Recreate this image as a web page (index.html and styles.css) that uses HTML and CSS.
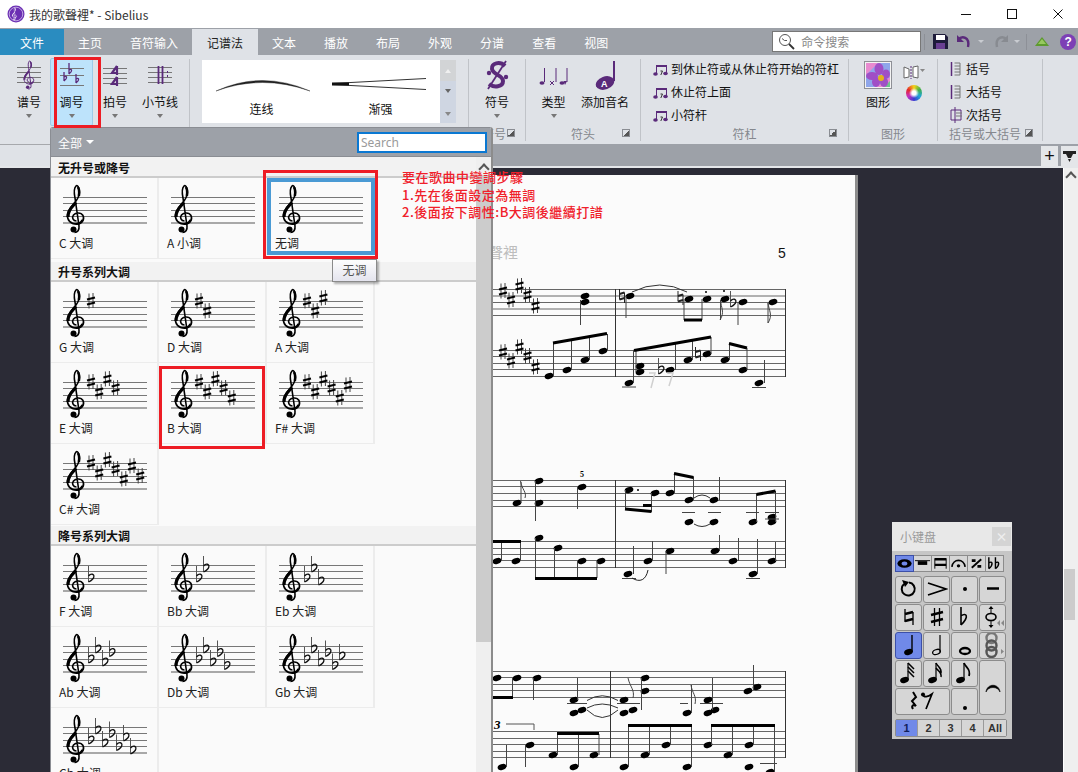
FILE: index.html
```html
<!DOCTYPE html>
<html lang="zh">
<head>
<meta charset="utf-8">
<title>我的歌聲裡* - Sibelius</title>
<link rel="stylesheet" href="styles.css">
</head>
<body>
<svg class="defs" aria-hidden="true"><defs>
  <g id="clef" fill="none" stroke="currentColor">
    <path stroke-width="1.6" d="M12.5 37C9 37 7.5 33.5 9.5 31C11.5 28.5 17 28 19 31.5C21 36 17.5 40 12.5 40C6.5 40 3 36 3.5 31C4 25 9 21 12 17C15 13 16 9 15 5C14.5 2 13 1 12 2C10 4 10 9 11 14L15 42C15.5 46 13.5 48.5 10.5 48.5"/>
    <path stroke-width="3.2" d="M4 33C3.500 26 9 22 12 18.500"/>
    <path stroke-width="2.6" d="M14.800 12C15.800 8 15 4 13.500 3"/>
    <path stroke-width="2.4" d="M18.500 36C17 39 14 40 11.500 39.800"/>
    <circle cx="9.500" cy="45.500" r="3" fill="currentColor" stroke="none"/>
  </g>
  <g id="staff">
    <path d="M0 14.500H84M0 20.500H84M0 27.500H84M0 33.500H84" stroke="#777" fill="none"/>
    <path d="M0 40H84" stroke="#a8a8a8" stroke-width="2" fill="none"/>
    <use href="#clef" transform="translate(1 1)"/>
  </g>
  <g id="sh">
    <path d="M-2 -7.500V7.500M2 -8V7" stroke="#444" fill="none"/>
    <path d="M-4 -1.500L4 -3.500M-4 3.500L4 1.500" stroke="#000" stroke-width="2" fill="none"/>
  </g>
  <g id="fl" fill="none">
    <path d="M-2.500 -11V5" stroke="#555"/>
    <path d="M-2.500 -1C0 -4 3.500 -3 2.800 0C2.300 2.500 -.5 4 -2.500 5" stroke="#111" stroke-width="1.300"/>
  </g>
  <g id="na" fill="none" stroke="#222">
    <path d="M-2.500 -7V3.500M2.500 -3.500V7" stroke-width="1"/>
    <path d="M-2.500 -2L2.500 -3.500M-2.500 3.500L2.500 2" stroke-width="2"/>
  </g>
  <ellipse id="n" rx="4.500" ry="2.900" transform="rotate(-20)" fill="#000"/>
  <g id="s1"><use href="#sh" x="28" y="14"/></g>
  <g id="s2"><use href="#s1"/><use href="#sh" x="36.200" y="24"/></g>
  <g id="s3"><use href="#s2"/><use href="#sh" x="44.400" y="11"/></g>
  <g id="s4"><use href="#s3"/><use href="#sh" x="52.600" y="20"/></g>
  <g id="s5"><use href="#s4"/><use href="#sh" x="60.800" y="30"/></g>
  <g id="s6"><use href="#s5"/><use href="#sh" x="69" y="17"/></g>
  <g id="s7"><use href="#s6"/><use href="#sh" x="77.200" y="27"/></g>
  <g id="f1"><use href="#fl" x="28" y="26"/></g>
  <g id="f2"><use href="#f1"/><use href="#fl" x="35" y="16"/></g>
  <g id="f3"><use href="#f2"/><use href="#fl" x="42" y="29"/></g>
  <g id="f4"><use href="#f3"/><use href="#fl" x="49" y="19.500"/></g>
  <g id="f5"><use href="#f4"/><use href="#fl" x="56" y="32.500"/></g>
  <g id="f6"><use href="#f5"/><use href="#fl" x="63" y="23"/></g>
  <g id="f7"><use href="#f6"/><use href="#fl" x="70" y="36"/></g>
  <g id="mini-beam" fill="none" stroke="#5a2a7a">
    <path d="M3 5H14" stroke-width="2"/>
    <path d="M3.500 5V13M13.500 5V12" stroke-width="1"/>
    <ellipse cx="2.500" cy="13" rx="2.300" ry="1.700" fill="#5a2a7a" stroke="none"/>
    <ellipse cx="12.500" cy="12.500" rx="2.300" ry="1.700" fill="#5a2a7a" stroke="none"/>
    <path d="M7.500 10L9.500 10L7.800 14" stroke="#333"/>
  </g>
  <g id="mini-bracket" fill="none" stroke="#5a2a7a">
    <path d="M1.500 1V15" stroke-width="1.500"/>
    <path d="M4.500 2H10V14H4.500M4.500 5H10M4.500 8H10M4.500 11H10" stroke="#777"/>
  </g>
</defs></svg>

<div class="app">
  <header class="titlebar">
    <svg class="app-icon" width="18" height="18" viewBox="0 0 18 18"><circle cx="9" cy="9" r="8.500" fill="#6b2fb3"/><circle cx="9" cy="9" r="6.800" fill="none" stroke="#e4d8f4" stroke-width=".7"/><use href="#clef" class="clef-white" transform="translate(4.500 2.500) scale(.26)"/></svg>
    <span class="title-text">我的歌聲裡* - Sibelius</span>
    <div class="winctl">
      <svg width="10" height="10" viewBox="0 0 10 10"><path d="M0 5.500H10" stroke="#111"/></svg>
      <svg width="10" height="10" viewBox="0 0 10 10"><rect x=".5" y=".5" width="9" height="9" fill="none" stroke="#111"/></svg>
      <svg width="10" height="10" viewBox="0 0 10 10"><path d="M.5 .5L9.500 9.500M9.500 .5L.5 9.500" stroke="#111"/></svg>
    </div>
  </header>

  <nav class="tabs">
    <span class="tab tab-file">文件</span>
    <span class="tab">主页</span>
    <span class="tab">音符输入</span>
    <span class="tab tab-active">记谱法</span>
    <span class="tab">文本</span>
    <span class="tab">播放</span>
    <span class="tab">布局</span>
    <span class="tab">外观</span>
    <span class="tab">分谱</span>
    <span class="tab">查看</span>
    <span class="tab">视图</span>
    <div class="quick">
      <div class="cmd-search">
        <svg width="17" height="17" viewBox="0 0 17 17"><circle cx="7" cy="7" r="5.500" fill="#fff" stroke="#555"/><path d="M11 11L16 16" stroke="#333" stroke-width="1.800"/><path d="M4 5.500L6.500 7.500H9" fill="none" stroke="#555"/></svg>
        <span>命令搜索</span>
      </div>
      <i class="q-sep"></i>
      <svg class="q-save" width="15" height="15" viewBox="0 0 15 15"><path d="M0 0H12L15 3V15H0Z" fill="#1e1b3a"/><rect x="3" y="1" width="9" height="5" fill="#fff"/><rect x="3" y="9" width="9" height="6" fill="#6a3f92"/></svg>
      <svg class="q-undo" width="17" height="15" viewBox="0 0 17 15"><path d="M2 6C6 1 14 3 12 13" fill="none" stroke="#5a2a7a" stroke-width="2.400"/><path d="M1 1V8H8Z" fill="#5a2a7a"/></svg>
      <i class="q-drop"></i>
      <svg class="q-redo" width="17" height="15" viewBox="0 0 17 15"><path d="M15 6C11 1 3 3 5 13" fill="none" stroke="#888b91" stroke-width="2.400"/><path d="M16 1V8H9Z" fill="#888b91"/></svg>
      <i class="q-drop"></i>
      <i class="q-sep"></i>
      <svg class="q-tri" width="14" height="9" viewBox="0 0 14 9"><path d="M7 0L14 9H0Z" fill="#5d9a2e"/><path d="M7 2L11 7H3Z" fill="#97c95f"/></svg>
      <span class="q-help">?</span>
    </div>
  </nav>

  <section class="ribbon">
    <div class="group g-notes">
      <div class="gbody">
        <div class="rb rb-clef">
          <svg width="28" height="30" viewBox="0 0 28 30"><path d="M2 7.500H26M2 12.500H26M2 17.500H26M2 22.500H26" stroke="#777" fill="none"/><use href="#clef" class="purple" transform="translate(7 0) scale(.6)"/></svg>
          <span>谱号</span><i class="drop"></i>
        </div>
        <div class="rb rb-key">
          <svg width="28" height="30" viewBox="0 0 28 30"><path d="M2 8.500H26M2 15.500H26M2 25.500H26" stroke="#777" fill="none"/><g class="purple"><path d="M11 3V14M11 10C14 8 15 11 11 14M6 12V21M6 17C9 15 10 18 6 21M18 14V23M18 19C21 17 22 20 18 23" fill="none" stroke="currentColor" stroke-width="1.300"/></g></svg>
          <span>调号</span><i class="drop"></i>
        </div>
        <div class="rb rb-time">
          <svg width="28" height="30" viewBox="0 0 28 30"><path d="M2 8.500H26M2 13.500H26M2 18.500H26M2 23.500H26" stroke="#777" fill="none"/><path d="M16 6L11 13H17M16 6V15M16 17L11 24H17M16 17V26" fill="none" stroke="#5a2a7a" stroke-width="2.200"/></svg>
          <span>拍号</span><i class="drop"></i>
        </div>
        <div class="rb rb-bar">
          <svg width="28" height="30" viewBox="0 0 28 30"><path d="M2 7.500H26M2 12.500H26M2 17.500H26M2 22.500H26" stroke="#777" fill="none"/><path d="M12.500 6V24M16.500 6V24" stroke="#5a2a7a" stroke-width="1.800"/><path d="M21.500 11V19" stroke="#5a2a7a" stroke-dasharray="2 2"/></svg>
          <span>小节线</span><i class="drop"></i>
        </div>
      </div>
    </div>

    <div class="group g-lines">
      <div class="gallery">
        <div class="g-item">
          <svg width="119" height="40" viewBox="0 0 119 40"><path d="M14 31Q60 10 108 31Q60 14 14 31Z" fill="#222" stroke="#222" stroke-width=".4"/></svg>
          <span>连线</span>
        </div>
        <div class="g-item">
          <svg width="119" height="40" viewBox="0 0 119 40"><path d="M11 23.500L105 18.500M11 24.500L105 29.500" stroke="#333" fill="none"/><path d="M11 22.500H28V25.500H11Z" fill="#111"/></svg>
          <span>渐强</span>
        </div>
        <div class="g-scroll">
          <b class="gs-up"></b><b class="gs-down"></b><b class="gs-more"></b>
        </div>
      </div>
    </div>

    <div class="group g-sym">
      <div class="gbody">
        <div class="rb rb-wide">
          <svg width="34" height="30" viewBox="0 0 34 30"><path d="M25 6C20 1 11 3 12 9C13 15 23 15 23 21C23 27 14 28 9 24" fill="none" stroke="#5a2a7a" stroke-width="4"/><path d="M26 1L8 29" stroke="#5a2a7a" stroke-width="1.800"/><circle cx="9" cy="13" r="2.200" fill="#5a2a7a"/><circle cx="26" cy="17" r="2.200" fill="#5a2a7a"/></svg>
          <span>符号</span><i class="drop"></i>
        </div>
      </div>
      <div class="glabel lbl-sym">符号<i class="expand"></i></div>
    </div>

    <div class="group g-head">
      <div class="gbody">
        <div class="rb rb-type">
          <svg width="30" height="30" viewBox="0 0 30 30"><g fill="#5a2a7a" stroke="none"><ellipse cx="3" cy="23" rx="2.500" ry="1.800"/><ellipse cx="23" cy="23" rx="2.500" ry="1.800"/></g><path d="M5.500 8V22M17 8V22M28 8V22" stroke="#5a2a7a"/><path d="M11 21L15 25M15 21L11 25" stroke="#5a2a7a"/><path d="M24.500 21L28 21L26 25Z" fill="#5a2a7a"/></svg>
          <span>类型</span><i class="drop"></i>
        </div>
        <div class="rb rb-name">
          <svg width="30" height="30" viewBox="0 0 30 30"><path d="M24 1V21" stroke="#5a2a7a" stroke-width="2"/><ellipse cx="15" cy="23" rx="9.500" ry="6.500" transform="rotate(-20 15 23)" fill="#5a2a7a"/><text x="11" y="27" class="name-a">A</text></svg>
          <span>添加音名</span>
        </div>
      </div>
      <div class="glabel">符头<i class="expand"></i></div>
    </div>

    <div class="group g-beam">
      <div class="gbody gcol">
        <div class="row"><svg width="16" height="16" viewBox="0 0 16 16"><use href="#mini-beam"/></svg><span>到休止符或从休止符开始的符杠</span></div>
        <div class="row"><svg width="16" height="16" viewBox="0 0 16 16"><use href="#mini-beam"/></svg><span>休止符上面</span></div>
        <div class="row"><svg width="16" height="16" viewBox="0 0 16 16"><use href="#mini-beam"/></svg><span>小符杆</span></div>
      </div>
      <div class="glabel">符杠<i class="expand"></i></div>
    </div>

    <div class="group g-graphic">
      <div class="gbody">
        <div class="rb rb-img">
          <svg class="img-icon" width="28" height="28" viewBox="0 0 28 28">
            <rect width="28" height="28" fill="#f3f3f3"/><rect x="2" y="2" width="24" height="24" fill="#8fa6ea"/>
            <path d="M2 2H14L2 14ZM26 16V26H12Z" fill="#e88ad0"/><path d="M20 26H26V20Z" fill="#6fc48d"/>
            <g fill="#a04fc6"><ellipse cx="15" cy="8" rx="4.500" ry="6"/><ellipse cx="8" cy="15" rx="6" ry="4"/><ellipse cx="22" cy="13" rx="4" ry="4.500"/><ellipse cx="12" cy="21" rx="4" ry="5"/><ellipse cx="20" cy="21" rx="4" ry="5"/></g>
            <circle cx="17" cy="17" r="3" fill="#e3b21f"/>
          </svg>
          <span>图形</span>
        </div>
        <div class="g-side">
          <svg width="22" height="14" viewBox="0 0 22 14"><path d="M1 2L6 4V12L1 13ZM10 2L15 1V13L10 12Z" fill="#fff" stroke="#666"/><path d="M8 1V14" stroke="#5a2a7a" stroke-dasharray="2 1"/><path d="M17 4H22L19.500 7Z" fill="#888"/></svg>
          <i class="wheel"></i>
        </div>
      </div>
      <div class="glabel">图形</div>
    </div>

    <div class="group g-brack">
      <div class="gbody gcol">
        <div class="row"><svg width="14" height="16" viewBox="0 0 14 16"><use href="#mini-bracket"/></svg><span>括号</span></div>
        <div class="row"><svg width="14" height="16" viewBox="0 0 14 16"><use href="#mini-bracket"/></svg><span>大括号</span></div>
        <div class="row"><svg width="14" height="16" viewBox="0 0 14 16"><path d="M5 0V16" stroke="#5a2a7a"/><path d="M1 3H11V13H1Z" fill="none" stroke="#5a2a7a"/><path d="M6 6H12M6 9H12" stroke="#777"/></svg><span>次括号</span></div>
      </div>
      <div class="glabel">括号或大括号<i class="expand"></i></div>
    </div>
  </section>

  <div class="docstrip">
    <div class="doc-tab"></div>
    <span class="strip-btn">+</span>
    <span class="strip-btn strip-menu"><svg width="13" height="11" viewBox="0 0 13 11"><path d="M0 0H13V3H10L8 7H5L3 3H0Z" fill="#222"/><path d="M5 8H8L6.500 11Z" fill="#222"/></svg></span>
  </div>

  <main class="workspace">
    <div class="canvas">
      <div class="page">
        <svg class="score" width="366" height="597" viewBox="491 175 366 597">
          <text x="518" y="258" class="score-title">我的歌聲裡</text>
          <text x="778" y="258" class="score-num">5</text>
          <g fill="none" stroke="#666">
            <path d="M491 289.500H785M491 296H785M491 302.500H785M491 309H785M491 315.500H785"/>
            <path d="M491 350.500H785M491 356.500H785M491 363.500H785M491 369.500H785M491 376.500H785"/>
            <path d="M491 480.500H785M491 486.500H785M491 493.500H785M491 500.500H785M491 506.500H785"/>
            <path d="M491 541.500H785M491 548.500H785M491 554.500H785M491 560.500H785M491 567.500H785"/>
            <path d="M491 671.500H785M491 677.500H785M491 684.500H785M491 690.500H785M491 697.500H785"/>
            <path d="M491 731.500H785M491 738.500H785M491 744.500H785M491 751.500H785M491 757.500H785"/>
            <path stroke="#333" d="M615.500 289V377M785.500 289V377M615.500 480V568M785.500 480V568M610.500 671V758M785.500 671V758"/>
          </g>
          <g><use href="#sh" x="503" y="291"/><use href="#sh" x="511" y="300"/><use href="#sh" x="519.500" y="286"/><use href="#sh" x="527.500" y="295"/><use href="#sh" x="535.500" y="306"/>
             <use href="#sh" x="503" y="352"/><use href="#sh" x="511" y="361"/><use href="#sh" x="519.500" y="347"/><use href="#sh" x="527.500" y="356"/><use href="#sh" x="535.500" y="367"/>
             <use href="#na" x="622" y="296"/><use href="#na" x="680.500" y="298"/><use href="#na" x="698" y="354"/>
             <use href="#fl" x="733" y="302"/><use href="#fl" x="661" y="369"/></g>
          <g>
            <use href="#n" x="585" y="296"/><use href="#n" x="585" y="302"/><use href="#n" x="630" y="296"/><use href="#n" x="689" y="299"/><use href="#n" x="707" y="299"/><use href="#n" x="725" y="299"/><use href="#n" x="743" y="302"/><use href="#n" x="773" y="302"/>
            <use href="#n" x="549" y="376"/><use href="#n" x="567" y="370"/><use href="#n" x="585" y="360"/><use href="#n" x="603" y="351"/>
            <use href="#n" x="629" y="383"/><use href="#n" x="640" y="366"/><use href="#n" x="640" y="372"/><use href="#n" x="670" y="370"/><use href="#n" x="688" y="360"/><use href="#n" x="707" y="354"/><use href="#n" x="725" y="360"/><use href="#n" x="743" y="370"/><use href="#n" x="759" y="383"/>
            <use href="#n" x="517" y="503"/><use href="#n" x="539" y="481"/><use href="#n" x="539" y="503"/><use href="#n" x="582" y="487"/>
            <use href="#n" x="629" y="490"/><use href="#n" x="655" y="493"/><use href="#n" x="670" y="493"/><use href="#n" x="689" y="500"/><use href="#n" x="689" y="522"/><use href="#n" x="714" y="500"/><use href="#n" x="714" y="522"/><use href="#n" x="753" y="522"/><use href="#n" x="772" y="517"/><use href="#n" x="772" y="522"/>
            <use href="#n" x="497" y="561"/><use href="#n" x="516" y="561"/><use href="#n" x="539" y="538"/><use href="#n" x="558" y="548"/><use href="#n" x="582" y="561"/><use href="#n" x="601" y="561"/>
            <use href="#n" x="628" y="574"/><use href="#n" x="648" y="561"/><use href="#n" x="670" y="551"/><use href="#n" x="715" y="551"/><use href="#n" x="733" y="561"/><use href="#n" x="753" y="574"/><use href="#n" x="772" y="561"/>
            <use href="#n" x="497" y="678"/><use href="#n" x="517" y="678"/><use href="#n" x="537" y="678"/><use href="#n" x="574" y="700"/><use href="#n" x="574" y="713"/><use href="#n" x="582" y="710"/><use href="#n" x="624" y="700"/><use href="#n" x="624" y="713"/><use href="#n" x="633" y="710"/><use href="#n" x="645" y="678"/><use href="#n" x="645" y="691"/><use href="#n" x="687" y="713"/><use href="#n" x="708" y="700"/><use href="#n" x="708" y="713"/><use href="#n" x="715" y="710"/><use href="#n" x="748" y="691"/><use href="#n" x="757" y="687"/>
            <use href="#n" x="502" y="767"/><use href="#n" x="530" y="745"/><use href="#n" x="553" y="755"/><use href="#n" x="574" y="767"/><use href="#n" x="594" y="755"/><use href="#n" x="624" y="767"/><use href="#n" x="645" y="755"/><use href="#n" x="666" y="745"/><use href="#n" x="687" y="767"/><use href="#n" x="708" y="745"/><use href="#n" x="728" y="755"/><use href="#n" x="749" y="745"/><use href="#n" x="749" y="767"/><use href="#n" x="770" y="772"/>
          </g>
          <g fill="none" stroke="#444">
            <path d="M580.500 300V325M626 296V318M684 299V320M702 299V320M720.500 300V320M738 302V325M768 303V323"/>
            <path d="M553.500 376V343M571.500 370V340M589.500 360V337M607.500 351V334"/>
            <path d="M633.500 383V350M636 372V351M675.500 370V344M692.500 360V340M711 354V337M729.500 360V343M747 370V348M764.500 383V360"/>
            <path d="M521 503V482M535.500 481V521M577.500 487V509M625.500 490V508M651.500 493V512M674.500 493V474M693.500 477V500M719.500 477V500"/>
            <path d="M756.500 522V494M775.500 522V491"/>
            <path d="M501.500 561V542M520.500 561V542M535.500 538V578M554.500 548V578M577.500 561V578M597 561V578"/>
            <path d="M633.500 574V546M652.500 561V541M666 551V574M719.500 551V535M738.500 561V538M757.500 574V539M775.500 561V542"/>
            <path d="M512.500 678V697M533.500 678V700M577.500 678V700M641.500 678V710M691.500 713V685M712.500 678V710M753.500 665V690"/>
            <path d="M506.500 745V767M525.500 745V767M557.500 755V734M578.500 767V734M599 755V734M628.500 767V726M649.500 755V726M670.500 745V726M691.500 767V726M711.500 745V726M732.500 755V726M753.500 745V726M774.500 772V726"/>
            <path d="M567 703.500H587M617 703.500H640M680 703.500H688M700 703.500H723M682 512.500H695M708 512.500H721M746 512.500H759M765 512.500H779M765 519H779M622 387H636M752 387.500H766"/>
            <path d="M760 763.500H777M622 578.500H636M746 578.500H760"/>
            <path d="M720.500 300C721 308 725 312 720 320M768 303C769 311 773 315 768 323M520.500 481C522 490 527 492 525 498M628 678C630 687 635 690 633 698M691 685C692 693 697 696 695 704"/>
            <path d="M632 292Q660 278 687 292" stroke="#333"/>
            <path d="M694 498Q702 492 710 498M694 524Q702 529 710 524M587 700.500Q602 691 618 700.500M587 708Q602 700 618 708M587 710Q602 725 618 710" stroke="#333"/>
            <path d="M632 578C640 583 646 580 648 570" stroke="#222"/>
            <path d="M506 724H534V730" stroke="#555"/>
            <path d="M649 373H655L651 388M667 373H673L669 386" stroke="#d0d0d0" stroke-width="1.500"/>
          </g>
          <g fill="none" stroke="#000" stroke-width="3">
            <path d="M553 343L607 333.500M634 350.500L711 337M729 343.500L747 348M684 320H702M625 509L651.500 511.500M643 505.500H651.500M674 473.500L693.500 477.500M756.500 494.500L775.500 491M491 541.500H521M535 578.500H597M493 697.500H513M557 733.500H599M628 725.500H692M711 725.500H775"/>
          </g>
          <g fill="#000"><circle cx="706" cy="292" r="1"/><circle cx="724" cy="291" r="1"/><circle cx="638" cy="490" r="1"/></g>
          <text x="582" y="477" class="score-bar">5</text>
          <text x="494" y="729" class="score-tuplet">3</text>
        </svg>
      </div>
    </div>
    <div class="vscroll"><i class="chev"></i><b class="vthumb"></b></div>
  </main>

  <!-- key signature gallery dropped from the ribbon -->
  <aside class="keypanel">
    <div class="kp-head">
      <span class="kp-filter">全部<i class="kp-arrow"></i></span>
      <span class="kp-search">Search</span>
    </div>
    <div class="kp-body">
      <div class="kp-list">
        <h3 class="sec">无升号或降号</h3>
        <div class="keys">
          <div class="key"><svg class="stave" viewBox="0 0 96 52"><use href="#staff"/></svg><span>C 大调</span></div>
          <div class="key"><svg class="stave" viewBox="0 0 96 52"><use href="#staff"/></svg><span>A 小调</span></div>
          <div class="key key-sel"><svg class="stave" viewBox="0 0 96 52"><use href="#staff"/></svg><span>无调</span></div>
        </div>
        <h3 class="sec sec-b">升号系列大调</h3>
        <div class="keys">
          <div class="key"><svg class="stave" viewBox="0 0 96 52"><use href="#staff"/><use href="#s1"/></svg><span>G 大调</span></div>
          <div class="key"><svg class="stave" viewBox="0 0 96 52"><use href="#staff"/><use href="#s2"/></svg><span>D 大调</span></div>
          <div class="key"><svg class="stave" viewBox="0 0 96 52"><use href="#staff"/><use href="#s3"/></svg><span>A 大调</span></div>
          <div class="key"><svg class="stave" viewBox="0 0 96 52"><use href="#staff"/><use href="#s4"/></svg><span>E 大调</span></div>
          <div class="key"><svg class="stave" viewBox="0 0 96 52"><use href="#staff"/><use href="#s5"/></svg><span>B 大调</span></div>
          <div class="key"><svg class="stave" viewBox="0 0 96 52"><use href="#staff"/><use href="#s6"/></svg><span>F# 大调</span></div>
          <div class="key"><svg class="stave" viewBox="0 0 96 52"><use href="#staff"/><use href="#s7"/></svg><span>C# 大调</span></div>
        </div>
        <h3 class="sec sec-c">降号系列大调</h3>
        <div class="keys">
          <div class="key"><svg class="stave" viewBox="0 0 96 52"><use href="#staff"/><use href="#f1"/></svg><span>F 大调</span></div>
          <div class="key"><svg class="stave" viewBox="0 0 96 52"><use href="#staff"/><use href="#f2"/></svg><span>Bb 大调</span></div>
          <div class="key"><svg class="stave" viewBox="0 0 96 52"><use href="#staff"/><use href="#f3"/></svg><span>Eb 大调</span></div>
          <div class="key"><svg class="stave" viewBox="0 0 96 52"><use href="#staff"/><use href="#f4"/></svg><span>Ab 大调</span></div>
          <div class="key"><svg class="stave" viewBox="0 0 96 52"><use href="#staff"/><use href="#f5"/></svg><span>Db 大调</span></div>
          <div class="key"><svg class="stave" viewBox="0 0 96 52"><use href="#staff"/><use href="#f6"/></svg><span>Gb 大调</span></div>
          <div class="key"><svg class="stave" viewBox="0 0 96 52"><use href="#staff"/><use href="#f7"/></svg><span>Cb 大调</span></div>
        </div>
      </div>
      <div class="kp-scroll"><i class="chev"></i><b class="kp-thumb"></b></div>
    </div>
  </aside>

  <div class="tip">无调</div>
  <div class="mark mark-btn"></div>
  <div class="mark mark-none"></div>
  <div class="mark mark-b"></div>
  <div class="note">
    <p>要在歌曲中變調步驟</p>
    <p>1.先在後面設定為無調</p>
    <p>2.後面按下調性:B大調後繼續打譜</p>
  </div>

  <!-- floating keypad window -->
  <aside class="keypad">
    <div class="pad-title"><span>小键盘</span><b class="pad-close">×</b></div>
    <div class="pad-tabs">
      <span class="pt pt-on"><svg width="18" height="17" viewBox="0 0 18 17"><ellipse cx="9" cy="8.500" rx="7.500" ry="4.500" fill="#000"/><ellipse cx="9" cy="8.500" rx="3" ry="2.200" fill="#7089e8"/></svg></span>
      <span class="pt"><svg width="18" height="17" viewBox="0 0 18 17"><path d="M1 5.500H17" stroke="#000"/><path d="M4 6H14V10H4Z" fill="#000"/></svg></span>
      <span class="pt"><svg width="18" height="17" viewBox="0 0 18 17"><path d="M3 3V14M15 3V14" stroke="#000"/><path d="M3 4H15M3 10H15" stroke="#000" stroke-width="2.500"/></svg></span>
      <span class="pt"><svg width="18" height="17" viewBox="0 0 18 17"><path d="M2 12C3 3 15 3 16 12" fill="none" stroke="#000" stroke-width="1.800"/><circle cx="9" cy="11" r="1.800"/></svg></span>
      <span class="pt"><svg width="18" height="17" viewBox="0 0 18 17"><path d="M14 4L4 13" stroke="#000" stroke-width="2"/><path d="M4 4H8V7H4ZM10 10H14V13H10Z"/></svg></span>
      <span class="pt"><svg width="18" height="17" viewBox="0 0 18 17"><path d="M3 2V14M3 8C7 5 8 10 3 14M10 2V14M10 8C14 5 15 10 10 14" fill="none" stroke="#000" stroke-width="1.500"/></svg></span>
    </div>
    <div class="pad-grid">
      <span class="pk"><svg width="20" height="20" viewBox="0 0 20 20"><path d="M5 5A6.500 6.500 0 1 0 10 3.500" fill="none" stroke="#000" stroke-width="2"/><path d="M3 1L10 3L6 8Z"/></svg></span>
      <span class="pk"><svg width="22" height="16" viewBox="0 0 22 16"><path d="M2 2L20 8L2 14" fill="none" stroke="#000" stroke-width="1.800"/></svg></span>
      <span class="pk"><svg width="20" height="20" viewBox="0 0 20 20"><circle cx="10" cy="10" r="2"/></svg></span>
      <span class="pk"><svg width="20" height="20" viewBox="0 0 20 20"><path d="M4 9.500H16" stroke="#000" stroke-width="2.400"/></svg></span>

      <span class="pk"><svg width="20" height="22" viewBox="-10 -11 20 22"><path d="M-4 -8V5M4 -5V8" stroke="#000" stroke-width="1.300"/><path d="M-4 -3L4 -5M-4 4L4 2" stroke="#000" stroke-width="2.400"/></svg></span>
      <span class="pk"><svg width="20" height="22" viewBox="-10 -11 20 22"><path d="M-2.500 -9V9M2.500 -9V9" stroke="#000" stroke-width="1.300"/><path d="M-6 -2L6 -5M-6 5L6 2" stroke="#000" stroke-width="2.400"/></svg></span>
      <span class="pk"><svg width="20" height="22" viewBox="-10 -11 20 22"><path d="M-4 -10V8M-4 -1C1 -5 5 -1 -4 8" fill="none" stroke="#000" stroke-width="1.600"/></svg></span>
      <span class="pk"><svg width="24" height="24" viewBox="0 0 24 24"><path d="M10 1L7.500 4H12.500ZM10 23L7.500 20H12.500Z"/><path d="M10 4V20" stroke="#000"/><ellipse cx="10" cy="12" rx="5" ry="3.500" fill="#d6d6d6" stroke="#000" stroke-width="1.600"/><path d="M16 18L19 15V21ZM20 18L23 15V21Z" fill="#888"/></svg></span>

      <span class="pk pk-on"><svg width="20" height="24" viewBox="0 0 20 24"><path d="M13 2V19" stroke="#000" stroke-width="1.400"/><ellipse cx="9.500" cy="19" rx="4.500" ry="3" transform="rotate(-20 9.500 19)"/></svg></span>
      <span class="pk"><svg width="20" height="24" viewBox="0 0 20 24"><path d="M13 2V19" stroke="#000" stroke-width="1.200"/><ellipse cx="9.500" cy="19" rx="4" ry="2.400" transform="rotate(-20 9.500 19)" fill="none" stroke="#000" stroke-width="1.300"/></svg></span>
      <span class="pk"><svg width="20" height="24" viewBox="0 0 20 24"><ellipse cx="10" cy="18" rx="5" ry="3" fill="none" stroke="#000" stroke-width="2.300"/></svg></span>
      <span class="pk"><svg width="24" height="26" viewBox="0 0 24 26"><circle cx="10.500" cy="6" r="5" fill="none" stroke="#777" stroke-width="2.400"/><circle cx="10.500" cy="13.500" r="5" fill="none" stroke="#555" stroke-width="2.400"/><circle cx="10.500" cy="20" r="5" fill="none" stroke="#555" stroke-width="2.400"/><path d="M20 17L23 19.500L20 22Z" fill="#888"/></svg></span>

      <span class="pk"><svg width="20" height="24" viewBox="0 0 20 24"><path d="M9 2V19" stroke="#000" stroke-width="1.200"/><path d="M9 2L15 8M9 6L15 12M9 10L15 16" fill="none" stroke="#000" stroke-width="1.500"/><ellipse cx="5.500" cy="19" rx="4.500" ry="3" transform="rotate(-20 5.500 19)"/></svg></span>
      <span class="pk"><svg width="20" height="24" viewBox="0 0 20 24"><path d="M9 2V19" stroke="#000" stroke-width="1.200"/><path d="M9 2C11 6 15 7 14 12M9 7C11 10 15 11 14 16" fill="none" stroke="#000" stroke-width="1.500"/><ellipse cx="5.500" cy="19" rx="4.500" ry="3" transform="rotate(-20 5.500 19)"/></svg></span>
      <span class="pk"><svg width="20" height="24" viewBox="0 0 20 24"><path d="M9 2V19" stroke="#000" stroke-width="1.200"/><path d="M9 2C11 7 16 8 14 15" fill="none" stroke="#000" stroke-width="1.800"/><ellipse cx="5.500" cy="19" rx="4.500" ry="3" transform="rotate(-20 5.500 19)"/></svg></span>
      <span class="pk pk-tall"><svg width="20" height="14" viewBox="0 0 20 14"><path d="M3 12C4 3 16 3 17 12C15 6 5 6 3 12Z" stroke="#000" stroke-width=".6"/></svg></span>

      <span class="pk pk-wide"><svg width="30" height="20" viewBox="0 0 30 20"><path d="M5 1L8 6L4 10L8 15C5 13 3 15 5 18" fill="none" stroke="#000" stroke-width="2"/><path d="M14 3C16 7 20 6 24 3L18 18" fill="none" stroke="#000" stroke-width="1.700"/><circle cx="15" cy="3.500" r="2"/></svg></span>
      <span class="pk pk-dot"><svg width="20" height="24" viewBox="0 0 20 24"><circle cx="10" cy="19" r="2"/></svg></span>
    </div>
    <div class="pad-layers">
      <span class="pl pl-on">1</span><span class="pl">2</span><span class="pl">3</span><span class="pl">4</span><span class="pl">All</span>
    </div>
  </aside>
</div>
</body>
</html>
```

FILE: styles.css
```css
* { box-sizing: border-box; margin: 0; padding: 0; }
html, body { width: 1078px; height: 772px; overflow: hidden; }
body { font: 12px "Noto Sans CJK SC", "Noto Sans", sans-serif; color: #111; background: #fff; }
i, b { display: block; font-style: normal; font-weight: normal; }
.defs { position: absolute; width: 0; height: 0; overflow: hidden; }
.purple { color: #5a2a7a; }
.clef-white { color: #fff; }

.app { position: relative; width: 1078px; height: 772px; display: flex; flex-direction: column; }

/* title bar */
.titlebar { height: 28px; flex: none; display: flex; align-items: center; padding-left: 7px; background: #fff; }
.app-icon { flex: none; }
.title-text { margin-left: 4px; font-size: 12px; color: #333; }
.winctl { margin-left: auto; display: flex; gap: 36px; padding-right: 15px; }

/* tab row */
.tabs { height: 27px; flex: none; display: flex; align-items: stretch; background: #9da1a8; }
.tab { flex: none; display: flex; align-items: center; justify-content: center; padding: 0 14px; color: #fff; font-size: 12px; white-space: nowrap; margin-top: 1px; }
.tab-file { width: 64px; padding: 0; background: #2a8cc0; }
.tab-active { padding: 0 15px; background: #dfe2e7; color: #222; }
.quick { flex: none; display: flex; align-items: center; margin-left: 150px; }
.cmd-search { width: 149px; height: 21px; display: flex; align-items: center; gap: 6px; padding-left: 5px; background: #fff; border: 1px solid #777; color: #888; }
.q-sep { width: 1px; height: 16px; background: #8d9097; margin: 0 8px 0 3px; }
.q-save { margin-right: 8px; }
.q-undo { margin-right: 5px; }
.q-drop { width: 0; height: 0; border: 3px solid transparent; border-top-color: #c9ccd1; border-bottom: 0; margin-right: 8px; }
.q-redo { margin-right: 5px; }
.q-redo + .q-drop { margin-right: 3px; }
.q-tri { margin-right: 11px; }
.q-help { width: 16px; height: 16px; border-radius: 50%; background: #7d3fb5; color: #fff; font: bold 12px/16px "Liberation Sans", sans-serif; text-align: center; }

/* ribbon */
.ribbon { height: 89px; flex: none; display: flex; align-items: stretch; padding: 4px 0 3px; background: #dfe2e7; }
.group { display: flex; flex-direction: column; border-right: 1px solid #c0c3c8; flex: none; }
.gbody { flex: 1; display: flex; min-height: 0; }
.gcol { flex-direction: column; }
.glabel { position: relative; height: 14px; line-height: 13px; text-align: center; color: #85888e; font-size: 12px; }
.expand { position: absolute; top: 2px; width: 8px; height: 8px; border: 1px solid #8a8d93; background: linear-gradient(135deg, transparent 50%, #555 50%); }
.rb { display: flex; flex-direction: column; align-items: center; padding-top: 1px; flex: none; }
.rb svg { flex: none; }
.rb span { margin-top: 4px; line-height: 16px; color: #111; font-size: 12px; white-space: nowrap; }
.drop { width: 0; height: 0; margin-top: 4px; border: 3px solid transparent; border-top: 4px solid #777; border-bottom: 0; }

.g-notes { width: 190px; }
.g-notes .gbody { padding-left: 8px; }
.rb-clef { width: 42px; }
.rb-key { width: 43px; }
.rb-time { width: 44px; }
.rb-bar { width: 46px; }
.rb-key { background: #bde3fb; border: 1px solid #9ccbe8; border-radius: 2px; height: 68px; margin-top: -1px; }

.g-lines { width: 279px; padding: 1px 0 0 12px; }
.gallery { width: 254px; height: 63px; display: flex; background: #fff; }
.g-item { width: 119px; display: flex; flex-direction: column; align-items: center; }
.g-item span { margin-top: 1px; line-height: 16px; font-size: 12px; }
.g-scroll { width: 16px; display: flex; flex-direction: column; }
.g-scroll b { flex: 1; position: relative; background: #cfd6e2; }
.g-scroll .gs-up { background: #d2d4d6; }
.gs-up::after { content: ""; position: absolute; left: 5px; top: 9px; border: 3px solid transparent; border-bottom: 4px solid #f0f0f0; border-top: 0; }
.gs-down::after { content: ""; position: absolute; left: 5px; top: 8px; border: 3px solid transparent; border-top: 4px solid #666; border-bottom: 0; }
.gs-more::after { content: ""; position: absolute; left: 5px; top: 10px; border: 3px solid transparent; border-top: 4px solid #888; border-bottom: 0; }

.g-sym { width: 57px; }
.rb-wide { width: 57px; padding-right: 1px; }
.lbl-sym { text-align: left; padding-left: 13px; }
.lbl-sym .expand { right: 10px; }

.g-head { width: 115px; }
.g-head .expand { right: 10px; }
.rb-type { width: 55px; }
.rb-name { width: 48px; }
.name-a { font: bold 9px "Liberation Sans", sans-serif; fill: #fff; }

.g-beam { width: 208px; }
.g-beam .expand { right: 11px; }
.g-graphic { width: 89px; }
.g-brack { width: 105px; }
.g-brack .glabel { padding-right: 10px; }
.g-brack .expand { right: 9px; }
.gcol { padding: 0 0 0 12px; margin-top: -2px; }
.row { height: 23px; flex: none; display: flex; align-items: center; gap: 2px; font-size: 12px; white-space: nowrap; }
.g-graphic .gbody { padding-left: 14px; gap: 5px; }
.rb-img { width: 30px; padding-top: 2px; }
.rb-img span { margin-top: 5px; }
.img-icon { outline: 1px solid #8e9096; outline-offset: -1px; }
.g-side { display: flex; flex-direction: column; align-items: center; padding-top: 6px; gap: 6px; width: 32px; }
.wheel { width: 16px; height: 16px; border-radius: 50%; background: radial-gradient(circle at center, #fff 0 2px, transparent 5px), conic-gradient(#f5d416, #3fb04a, #1fa5d8, #3b3bd1, #c62fc0, #e62828, #f5d416); }

/* document tab strip */
.docstrip { height: 24px; flex: none; display: flex; align-items: flex-start; background: #9da1a8; border-bottom: 2px solid #e4e6e9; }
.doc-tab { width: 492px; height: 22px; background: #dfe2e7; border-top: 1px solid #a6a8ac; }
.strip-btn { width: 17px; height: 20px; margin-top: 2px; display: flex; align-items: center; justify-content: center; background: #e4e6e9; font: 18px/20px "Liberation Sans", sans-serif; color: #111; }
.doc-tab + .strip-btn { margin-left: 549px; }
.strip-menu { margin-left: 3px; flex: 1; }

/* workspace */
.workspace { flex: 1; min-height: 0; display: flex; background: #2b2b36; }
.canvas { flex: 1; min-width: 0; padding: 7px 0 0 491px; overflow: hidden; }
.page { width: 364px; height: 620px; background: #fbfbfb; box-shadow: 3px 0 0 #8c8c8c; overflow: hidden; }
.score { display: block; margin-right: -2px; }
.score-title { font-size: 15px; fill: #bdbdbd; text-anchor: end; }
.score-num { font: 14px "Liberation Sans", sans-serif; fill: #111; }
.score-bar { font: bold 8px "Liberation Serif", serif; fill: #000; text-anchor: middle; }
.score-tuplet { font: italic bold 13px "Liberation Serif", serif; fill: #000; }
.vscroll { width: 15px; flex: none; position: relative; background: #efefef; border-left: 1px solid #fff; }
.chev { position: absolute; left: 3px; top: 5px; width: 8px; height: 8px; border: solid #555; border-width: 2px 0 0 2px; transform: rotate(45deg); }
.vthumb { position: absolute; left: 0; top: 401px; width: 11px; height: 51px; background: #ccc; }

/* key signature panel */
.keypanel { position: absolute; left: 50px; top: 127px; width: 443px; height: 645px; display: flex; flex-direction: column; border-left: 1px solid #8a8d93; border-right: 2px solid #8c8c8c; border-radius: 3px 3px 0 0; background: #fafafa; overflow: hidden; }
.kp-head { height: 30px; flex: none; display: flex; align-items: center; justify-content: space-between; padding: 0 4px 0 7px; background: #9da1a8; border-bottom: 1px solid #8a8d93; border-top: 1px solid #8a8d93; }
.kp-filter { display: flex; align-items: center; gap: 4px; color: #fff; font-size: 12px; }
.kp-arrow { border: 4px solid transparent; border-top: 4px solid #fff; border-bottom: 0; }
.kp-search { width: 130px; height: 21px; padding-left: 2px; background: #fff; border: 2px solid #0a78d2; font: 12px/17px "Noto Sans", sans-serif; color: #9a9a9a; }
.kp-body { flex: 1; min-height: 0; display: flex; }
.kp-list { width: 425px; flex: none; overflow: hidden; }
.sec { height: 21px; padding-left: 7px; font-size: 12px; font-weight: 700; line-height: 21px; color: #111; background: #f2f2f2; border-bottom: 2px solid #ccc; }
.sec-b { margin-top: 3px; height: 20px; line-height: 20px; }
.sec-c { margin-top: 1px; height: 20px; line-height: 20px; }
.keys { display: grid; grid-template-columns: repeat(3, 108px); grid-auto-rows: 81px; }
.key { position: relative; display: flex; flex-direction: column; border-right: 2px solid #ececec; border-bottom: 1px solid #ececec; padding: 5px 0 0 8px; }
.stave { display: block; width: 96px; height: 52px; margin-left: 4px; flex: none; color: #000; }
.key span { margin-top: 0; line-height: 16px; font-size: 12px; color: #222; }
.key-sel { border: 4px solid #4a9ad4; padding: 1px 0 0 4px; height: 77px; }
.kp-scroll { flex: 1; position: relative; background: #efefef; }
.kp-scroll .chev { left: 4px; top: 8px; }
.kp-thumb { position: absolute; left: 0; top: 18px; width: 100%; height: 467px; background: #ccc; }

/* overlays */
.tip { position: absolute; left: 332px; top: 259px; width: 45px; height: 23px; line-height: 20px; text-align: center; color: #555; background: linear-gradient(#fdfdfd, #e4e4ee); border: 1px solid #8a8a8a; box-shadow: 2px 2px 2px rgba(0,0,0,.3); }
.mark { position: absolute; border: 3px solid #ed1c24; }
.mark-btn { left: 54px; top: 57px; width: 47px; height: 71px; }
.mark-none { left: 263px; top: 170px; width: 115px; height: 89px; }
.mark-b { left: 159px; top: 366px; width: 106px; height: 83px; }
.note { position: absolute; left: 402px; top: 168px; color: #f0202a; font-size: 13px; font-weight: 500; letter-spacing: .5px; line-height: 17.500px; white-space: nowrap; }

/* keypad window */
.keypad { position: absolute; left: 892px; top: 522px; width: 120px; height: 217px; background: #c6c6c6; display: flex; flex-direction: column; align-items: flex-start; }
.pad-title { width: 100%; height: 29px; flex: none; display: flex; align-items: center; justify-content: space-between; padding-left: 8px; background: #e8e8e8; color: #9a9a9a; font-size: 12px; }
.pad-close { width: 19px; height: 19px; margin-right: 1px; background: #d4d4d4; color: #eee; text-align: center; line-height: 19px; font-weight: 700; }
.pad-tabs { display: flex; margin: 4px 0 0 3px; height: 17px; flex: none; }
.pt { width: 18px; height: 17px; display: flex; align-items: center; justify-content: center; background: #d6d6d6; border: 1px solid #8c8c8c; border-left: 0; }
.pt:first-child { width: 19px; border-left: 1px solid #3c50a8; }
.pt-on { background: #7089e8; border-color: #3c50a8; }
.pad-grid { display: grid; grid-template-columns: repeat(4, 27px); grid-auto-rows: 26.500px; gap: 1.500px 1px; margin: 4px 0 0 3px; }
.pk { display: flex; align-items: center; justify-content: center; background: #d6d6d6; border: 1px solid #8c8c8c; border-radius: 3px; overflow: hidden; }
.pk-on { background: #7089e8; border-color: #3c50a8; }
.pk-tall { grid-row: span 2; grid-column: 4; }
.pk-wide { grid-column: span 2; }
.pad-layers { display: flex; margin: 4px 0 0 3px; height: 18px; border: 1px solid #8c8c8c; border-radius: 2px; }
.pl { width: 22px; line-height: 16px; text-align: center; background: #d6d6d6; border-right: 1px solid #9a9a9a; font: bold 11px/16px "Liberation Sans", sans-serif; color: #333; }
.pl:last-child { border-right: 0; }
.pl-on { background: #7089e8; color: #10205a; }
```
